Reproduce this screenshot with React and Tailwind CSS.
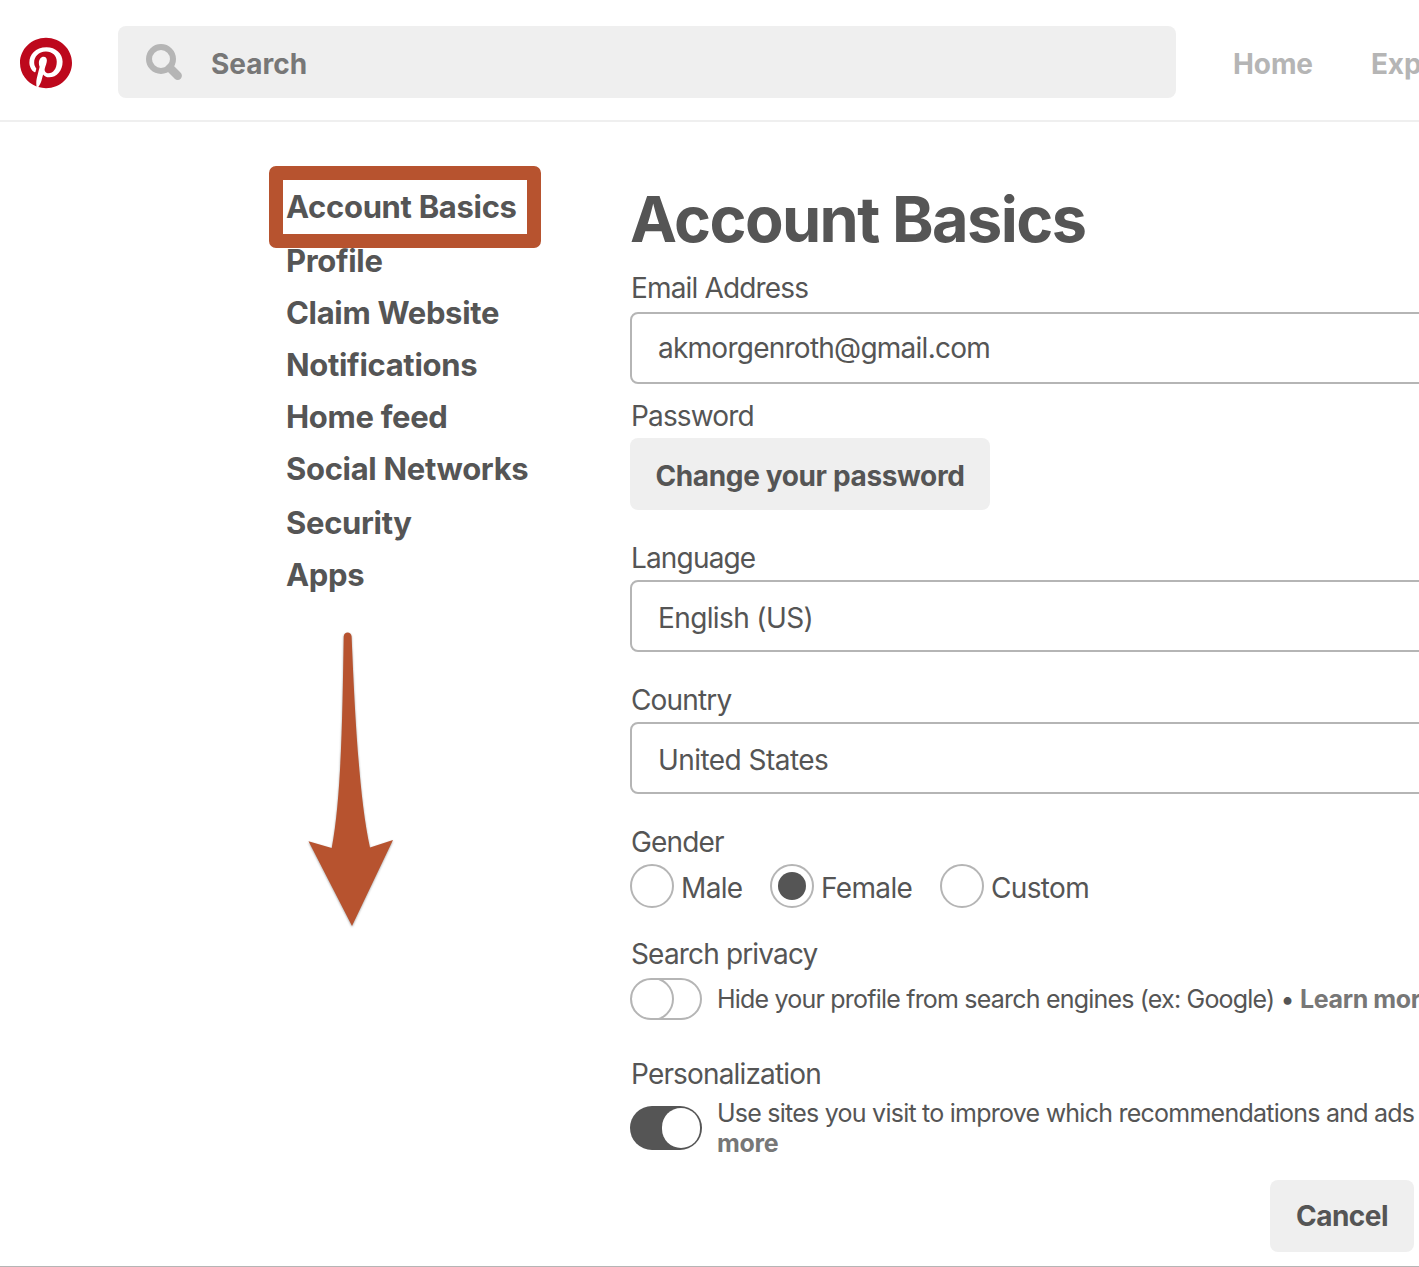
import { FaPinterest } from "react-icons/fa";

const NAV = [
  ["Account Basics", "h-[54px]"],
  ["Profile", "h-[52px]"],
  ["Claim Website", "h-[52px]"],
  ["Notifications", "h-[52px]"],
  ["Home feed", "h-[52px]"],
  ["Social Networks", "h-[54px]"],
  ["Security", "h-[52px]"],
  ["Apps", "h-[52px]"],
];

function SearchIcon() {
  return (
    <svg className="ml-7 h-[37px] w-[37px]" viewBox="0 0 37 37" fill="none" stroke="#b5b5b5">
      <circle cx="15" cy="15" r="12" strokeWidth="6" />
      <path d="M24 24L31.7 31.7" strokeWidth="8.4" strokeLinecap="round" />
    </svg>
  );
}

function Label({ children, className = "" }) {
  return (
    <div className={`h-8 pl-px text-[28px] leading-[33px] tracking-[-0.84px] ${className}`}>{children}</div>
  );
}

function Field({ children, className = "" }) {
  return (
    <div className={`flex h-[72px] w-[960px] items-center rounded-lg border-2 border-[#b5b5b5] px-[26px] text-[28px] ${className}`}>
      {children}
    </div>
  );
}

function Radio({ label, checked, className = "" }) {
  return (
    <label className={`flex items-center ${className}`}>
      <span className="flex size-11 items-center justify-center rounded-full border-2 border-[#b5b5b5]">
        {checked && <span className="size-7 rounded-full bg-[#555]" />}
      </span>
      <span className="mt-1 ml-[7px] text-[28px] leading-8 tracking-[-0.65px]">{label}</span>
    </label>
  );
}

export default function App() {
  return (
    <div className="h-[1267px] w-[1419px] overflow-hidden border-b border-[#b5b5b5] bg-white font-['Inter',sans-serif] whitespace-nowrap text-[#555]">
      <header className="flex h-[122px] border-b-2 border-[#efefef]">
        <FaPinterest className="mt-[37px] ml-5 h-[52px] w-[52px] shrink-0 text-[#bd081c]" preserveAspectRatio="none" />
        <div className="mt-[26px] ml-[46px] flex h-[72px] w-[1058px] shrink-0 items-center rounded-lg bg-[#efefef]">
          <SearchIcon />
          <span className="mt-1 ml-7 text-[28px] font-bold text-[#777]">Search</span>
        </div>
        <nav className="mt-[46px] ml-[57px] flex h-9 items-center gap-[58px] text-[28px] font-bold tracking-[-0.1px] text-[#b5b5b5]">
          <span>Home</span>
          <span>Explore</span>
        </nav>
      </header>

      <div className="flex">
        <aside className="relative ml-[286px] w-[344px] shrink-0 pt-[59px]">
          <ul className="text-[31px] font-bold tracking-[-0.32px]">
            {NAV.map(([name, height]) => (
              <li key={name} className={`leading-[52px] ${height}`}>{name}</li>
            ))}
          </ul>
          <div className="absolute top-[44px] left-[-17.4px] h-[82px] w-[272.5px] rounded-[7px] border-[14px] border-[#b7532f]" />
          <svg className="absolute top-[505px] left-[16px] h-[310px] w-[100px] drop-shadow-[0_1px_1px_rgba(0,0,0,0.35)]" viewBox="302 627 100 310" fill="#b7532f">
            <path d="M343.7 636.5C343.9 631.3 351.3 631.3 351.6 636.5C354.3 700 358.5 796 370 847.5L393 840L352 926L308.5 841.3L331.7 848C341.5 798 342.5 710 343.7 636.5Z" />
          </svg>
        </aside>

        <main className="w-[960px] shrink-0 pt-[62px]">
          <h1 className="h-[70px] text-[63px] leading-[70px] font-bold tracking-[-1.6px]">Account Basics</h1>
          <Label className="mt-[18px]">Email Address</Label>
          <Field className="mt-2 pb-px tracking-[-0.75px]">akmorgenroth@gmail.com</Field>
          <Label className="mt-4">Password</Label>
          <button className="mt-1.5 flex h-[72px] w-[360px] items-center justify-center rounded-lg bg-[#efefef] pt-1 text-[28px] font-bold tracking-[-0.36px]">
            Change your password
          </button>
          <Label className="mt-8">Language</Label>
          <Field className="mt-1.5 pt-[3px] tracking-[-0.62px]">English (US)</Field>
          <Label className="mt-8">Country</Label>
          <Field className="mt-1.5 pt-[3px] tracking-[-0.55px]">United States</Field>
          <Label className="mt-8">Gender</Label>
          <div className="mt-1.5 flex h-11">
            <Radio label="Male" className="w-[140px]" />
            <Radio label="Female" checked className="w-[170px]" />
            <Radio label="Custom" />
          </div>
          <Label className="mt-[30px]">Search privacy</Label>
          <div className="mt-2 flex h-[42px] items-center">
            <span className="flex h-[42px] w-[72px] overflow-hidden rounded-full border-2 border-[#b5b5b5]">
              <span className="-mt-[3px] -ml-0.5 size-11 shrink-0 rounded-full border-2 border-[#b5b5b5]" />
            </span>
            <p className="ml-[15px] text-[25px] leading-[30px] tracking-[-0.8px]">
              Hide your profile from search engines (ex: Google) • <b className="font-bold tracking-[-0.4px] text-[#777]">Learn more</b>
            </p>
          </div>
          <Label className="mt-[38px]">Personalization</Label>
          <div className="mt-2 flex h-[60px] items-center">
            <span className="flex h-11 w-[72px] justify-end rounded-full bg-[#555] p-0.5">
              <span className="h-10 w-[38px] rounded-full bg-white" />
            </span>
            <p className="ml-[15px] text-[25px] leading-[30px] tracking-[-0.76px]">
              Use sites you visit to improve which recommendations and ads
              <br />
              <b className="font-bold tracking-[-0.3px] text-[#777]">more</b>
            </p>
          </div>
          <button className="mt-[22px] ml-[640px] flex h-[72px] w-36 items-center justify-center rounded-lg bg-[#efefef] text-[28px] font-bold tracking-[-0.5px]">
            Cancel
          </button>
        </main>
      </div>
    </div>
  );
}
